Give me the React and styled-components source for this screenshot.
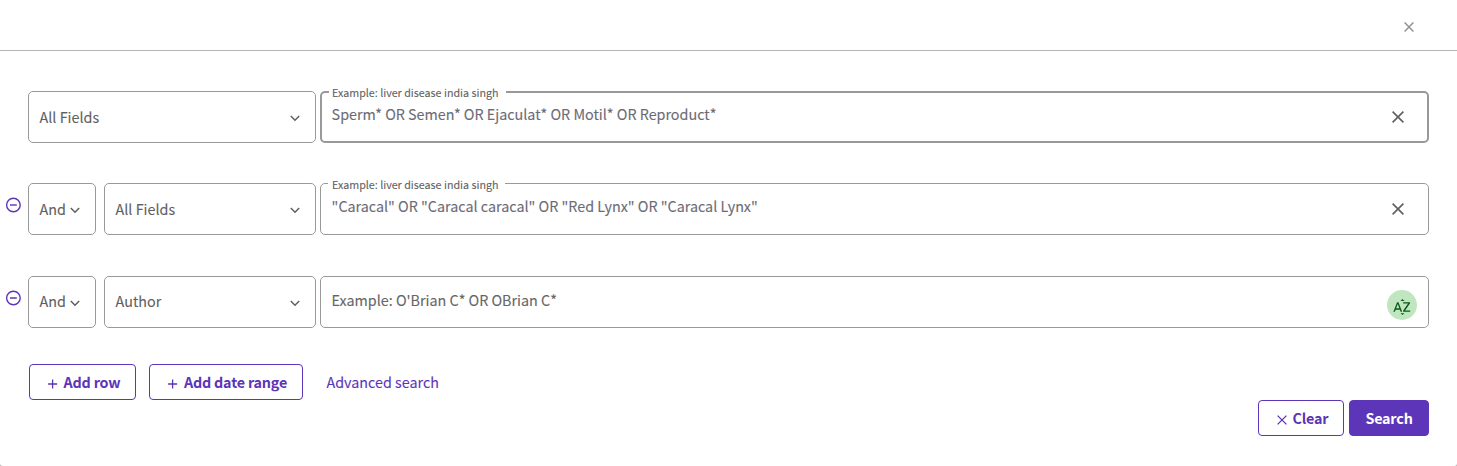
import React from "react";
import styled, { createGlobalStyle, css } from "styled-components";
import { MdSortByAlpha } from "react-icons/md";

const purple = "#5c35b8";
const grey = "#5f5f5f";
const line = "#999";

const GlobalStyle = createGlobalStyle`
  * { box-sizing: border-box; }
  body { margin: 0; background: #b9b9b9; }
  button { font: inherit; cursor: pointer; margin: 0; }
`;

const Dialog = styled.div`
  height: 466px;
  display: flex;
  flex-direction: column;
  background: #fff;
  border-radius: 0 0 3px 3px;
  font-family: "Noto Sans CJK SC", "Noto Sans", sans-serif;
  font-size: 14.34px;
  line-height: 20px;
  color: ${grey};
  -webkit-text-stroke: 0.1px currentColor;
  overflow: hidden;
`;

const Header = styled.header`
  height: 51px;
  flex: none;
  display: flex;
  justify-content: flex-end;
  padding: 22px 43px 0 0;
  border-bottom: 1px solid #b5b5b5;
`;

const IconButton = styled.button`
  display: flex;
  align-items: center;
  justify-content: center;
  padding: 0;
  border: 0;
  background: none;
  width: ${(p) => p.$size}px;
  height: ${(p) => p.$size}px;
  color: ${(p) => p.$color || grey};
`;

const Rows = styled.div`
  display: flex;
  flex-direction: column;
  padding: 40px 28px 0 0;
`;

const Row = styled.div`
  display: flex;
  height: 52px;
  margin-bottom: ${(p) => p.$gap}px;
`;

const Gutter = styled.div`
  width: 28px;
  flex: none;
  padding: 14px 0 0 5px;
`;

const Select = styled.button`
  width: ${(p) => p.$width}px;
  flex: none;
  display: flex;
  align-items: center;
  justify-content: space-between;
  padding: 0 ${(p) => p.$right}px ${(p) => p.$lift || 0}px 10.6px;
  margin-right: ${(p) => p.$after}px;
  border: 1px solid ${line};
  border-radius: 5px;
  background: #fff;
  color: ${grey};
  text-align: left;
  svg { margin-top: ${(p) => 2 + (p.$lift || 0)}px; }
`;

const Field = styled.div`
  position: relative;
  flex: 1;
  display: flex;
  justify-content: space-between;
  border: 1px solid ${line};
  border-radius: 5px;
  padding: 0 10px 0 10.6px;
  ${(p) =>
    p.$focused &&
    css`
      border-width: 2px;
      padding: 0 9px 0 9.6px;
    `}
`;

const FieldLabel = styled.span`
  position: absolute;
  top: ${(p) => (p.$focused ? -8 : -7)}px;
  left: 7px;
  width: 177px;
  padding-left: ${(p) => (p.$focused ? 3 : 4)}px;
  background: #fff;
  font-size: 10.72px;
  line-height: 16px;
  white-space: nowrap;
`;

const FieldText = styled.span`
  padding-top: ${(p) => p.$top}px;
  white-space: pre;
  color: ${(p) => p.$color};
`;

const FieldAction = styled.div`
  display: flex;
  align-items: center;
  padding-right: 14px;
`;

const SortBadge = styled.span`
  align-self: flex-start;
  width: 30px;
  height: 30px;
  margin: 13px 1px 0 0;
  padding: 3px 0 0 0;
  display: flex;
  align-items: center;
  justify-content: center;
  border-radius: 50%;
  background: #bfe6bf;
  color: #0a5a18;
`;

const Actions = styled.div`
  display: flex;
  align-items: center;
  height: 36px;
  padding-left: 29px;
`;

const Button = styled.button`
  width: ${(p) => p.$width}px;
  height: 36px;
  display: flex;
  align-items: center;
  justify-content: center;
  gap: 6px;
  padding: 0 0 0 ${(p) => (p.$primary ? 0 : 3)}px;
  margin-right: ${(p) => p.$after || 0}px;
  border: 1px solid ${purple};
  border-radius: 4px;
  background: ${(p) => (p.$primary ? purple : "#fff")};
  color: ${(p) => (p.$primary ? "#fff" : purple)};
  font-weight: 700;
  letter-spacing: -0.18px;
  white-space: nowrap;
  -webkit-text-stroke-width: 0;
  svg { margin-top: 3px; }
`;

const Link = styled.a`
  color: ${purple};
`;

const Footer = styled.footer`
  display: flex;
  justify-content: flex-end;
  padding-right: 28px;
`;

const Cross = ({ size, stroke = 1.6 }) => (
  <svg width={size} height={size} viewBox={`0 0 ${size} ${size}`} fill="none" stroke="currentColor" strokeWidth={stroke}>
    <path d={`M.6 .6L${size - 0.6} ${size - 0.6}M${size - 0.6} .6L.6 ${size - 0.6}`} />
  </svg>
);

const Plus = () => (
  <svg width="10" height="10" viewBox="0 0 10 10" fill="none" stroke="currentColor" strokeWidth="1.3">
    <path d="M4.600 .5V9.500M.1 5H9.100" />
  </svg>
);

const Chevron = () => (
  <svg width="10" height="7" viewBox="0 0 10 7" fill="none" stroke="currentColor" strokeWidth="1.5">
    <path d="M.8 1L5 5.200L9.200 1" />
  </svg>
);

const Minus = () => (
  <svg width="16" height="16" viewBox="0 0 16 16" fill="none" stroke="currentColor" strokeWidth="1.4">
    <circle cx="8.400" cy="8" r="6.800" />
    <path d="M5 8H11.800" />
  </svg>
);

const RemoveButton = () => (
  <IconButton $size={16} $color={purple} aria-label="Remove row">
    <Minus />
  </IconButton>
);

const ClearField = () => (
  <FieldAction>
    <IconButton $size={12} aria-label="Clear field">
      <Cross size={12} />
    </IconButton>
  </FieldAction>
);

const Operator = ({ lift }) => (
  <Select $width={68} $right={15} $after={8} $lift={lift}>
    And <Chevron />
  </Select>
);

export default function App() {
  return (
    <Dialog>
      <GlobalStyle />
      <Header>
        <IconButton $size={10} $color="#8f8f8f" aria-label="Close">
          <Cross size={10} stroke={1.4} />
        </IconButton>
      </Header>
      <Rows>
        <Row $gap={40}>
          <Gutter />
          <Select $width={288} $right={15} $after={4}>
            All Fields <Chevron />
          </Select>
          <Field $focused>
            <FieldLabel $focused>Example: liver disease india singh</FieldLabel>
            <FieldText $top={11} $color="#6b6b76">
              Sperm* OR Semen* OR Ejaculat* OR Motil* OR Reproduct*
            </FieldText>
            <ClearField />
          </Field>
        </Row>
        <Row $gap={41}>
          <Gutter>
            <RemoveButton />
          </Gutter>
          <Operator />
          <Select $width={212} $right={15} $after={4}>
            All Fields <Chevron />
          </Select>
          <Field>
            <FieldLabel>Example: liver disease india singh</FieldLabel>
            <FieldText $top={12} $color="#6b6b76">
              "Caracal" OR "Caracal caracal" OR "Red Lynx" OR "Caracal Lynx"
            </FieldText>
            <ClearField />
          </Field>
        </Row>
        <Row $gap={36}>
          <Gutter>
            <RemoveButton />
          </Gutter>
          <Operator lift={2} />
          <Select $width={212} $right={15} $after={4} $lift={2}>
            Author <Chevron />
          </Select>
          <Field>
            <FieldText $top={13} $color="#666">
              Example: O'Brian C* OR OBrian C*
            </FieldText>
            <SortBadge>
              <MdSortByAlpha size={20} />
            </SortBadge>
          </Field>
        </Row>
      </Rows>
      <Actions>
        <Button $width={107} $after={13}>
          <Plus /> Add row
        </Button>
        <Button $width={154} $after={23.5}>
          <Plus /> Add date range
        </Button>
        <Link>Advanced search</Link>
      </Actions>
      <Footer>
        <Button $width={86} $after={5}>
          <Cross size={10} stroke={1.3} /> Clear
        </Button>
        <Button $width={80} $primary>
          Search
        </Button>
      </Footer>
    </Dialog>
  );
}
